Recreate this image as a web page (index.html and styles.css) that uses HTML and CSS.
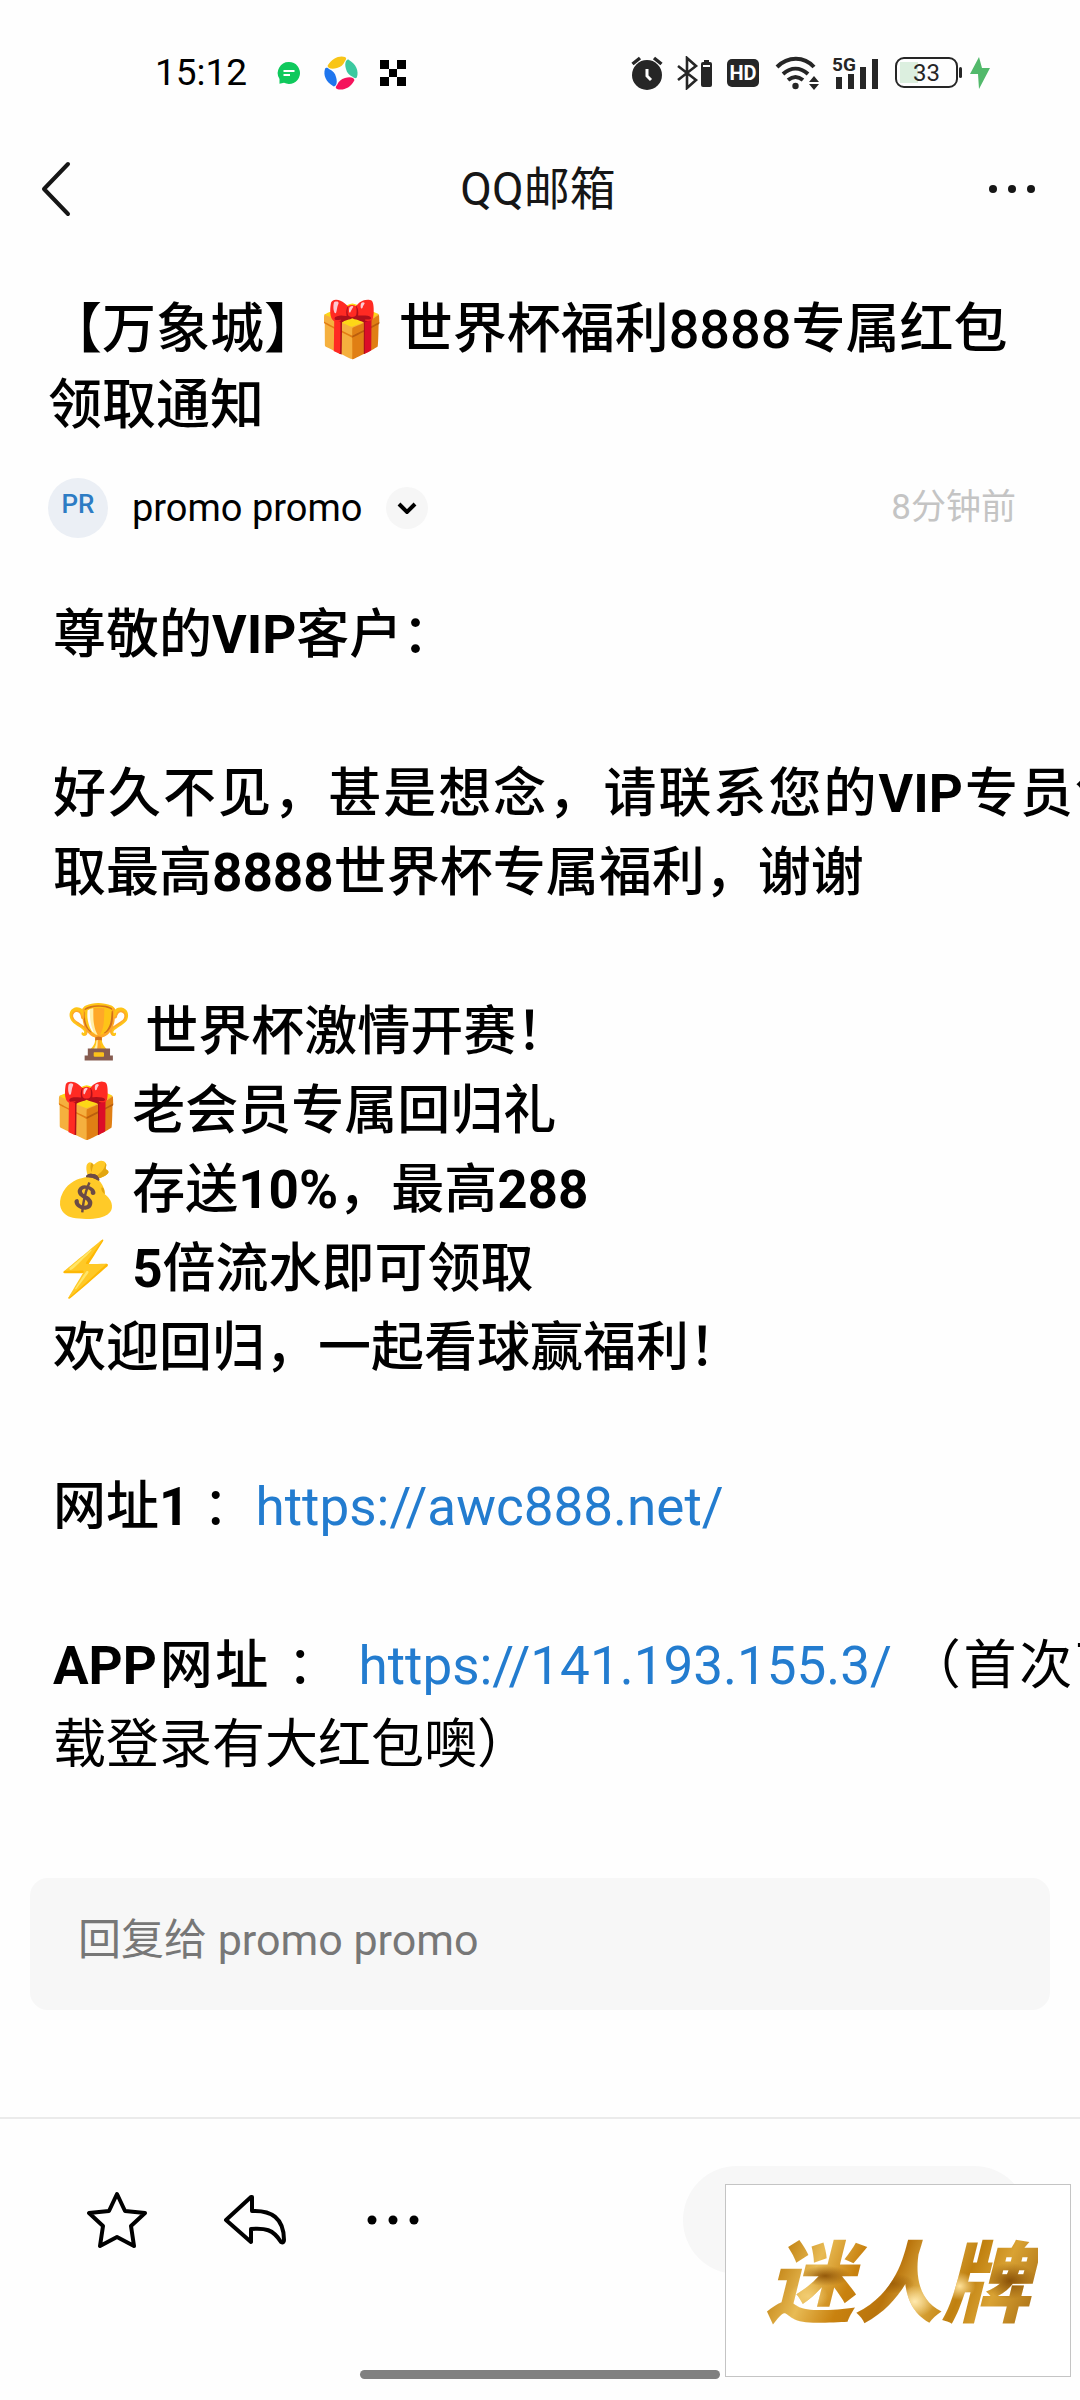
FILE: index.html
```html
<!DOCTYPE html>
<html lang="zh-CN">
<head>
<meta charset="utf-8">
<meta name="viewport" content="width=device-width, initial-scale=1">
<title>QQ邮箱</title>
<link rel="stylesheet" href="styles.css">
</head>
<body>
<div class="screen">
  <div class="status">
    <div class="status-left">
      <span class="clock">15:12</span>
      <svg class="ico-chat" width="24" height="24" viewBox="0 0 24 24" aria-hidden="true"><path d="M12 1a11 11 0 1 1-5 20.800l-4.500 1L2.500 18A11 11 0 0 1 12 1z" fill="#0fc95c"/><path d="M6.500 10h11M6.500 14h6.500" stroke="#fff" stroke-width="1.800"/></svg>
      <svg class="ico-pinwheel" width="36" height="36" viewBox="0 0 36 36" aria-hidden="true"><path d="M5 10C9 3 17 0 22 2c2 1 1 3 0 4-2 4-4 6-8 7-3 1-6 1-8 0-1-1-2-2-1-3z" fill="#f8c518"/><path d="M26 5c7 4 10 11 8 17-1 2-3 1-4 0-4-2-6-4-7-8-1-3-1-6 0-8 1-1 2-2 3-1z" fill="#3cc9a0"/><path d="M31 26c-4 7-11 10-17 8-2-1-1-3 0-4 2-4 4-6 8-7 3-1 6-1 8 0 1 1 2 2 1 3z" fill="#f5135c"/><path d="M10 31C3 27 0 20 2 14c1-2 3-1 4 0 4 2 6 4 7 8 1 3 1 6 0 8-1 1-2 2-3 1z" fill="#1f76ee"/></svg>
      <svg class="ico-check" width="26" height="26" viewBox="0 0 26 26" aria-hidden="true"><path d="M0 0h9v9H0zM17 0h9v9h-9zM9 9h8v8H9zM0 17h9v9H0zM17 17h9v9h-9z"/></svg>
    </div>
    <div class="status-right">
      <svg width="32" height="34" viewBox="0 0 32 34" aria-hidden="true"><circle cx="16" cy="19" r="15" fill="#262626"/><path d="M1.500 8L9 2M30.500 8L23 2" stroke="#262626" stroke-width="3.500"/><path d="M16 13v7l4 4" fill="none" stroke="#fff" stroke-width="3"/></svg>
      <svg class="gap-bt" width="35" height="34" viewBox="0 0 35 34" aria-hidden="true"><path d="M1 10l18 14-9 8V2l9 8L1 24" fill="none" stroke="#262626" stroke-width="2.600"/><path d="M27 4h5v2h-5z" fill="#262626"/><rect x="24" y="6" width="11" height="25" rx="2" fill="#262626"/><path d="M26 10h7" stroke="#fff" stroke-width="2"/></svg>
      <span class="hd">HD</span>
      <svg class="gap-wifi" width="44" height="34" viewBox="0 0 44 34" aria-hidden="true"><g fill="none" stroke="#262626" stroke-width="4"><path d="M2 11c11-11 27-11 37 0"/><path d="M8 18c8-7 17-7 25 0"/><path d="M13 24c5-4 10-4 15 0"/></g><circle cx="20.500" cy="30" r="3.200" fill="#262626"/><path d="M39 20l5 6H34zM39 34l5-6H34z" fill="#262626"/></svg>
      <svg class="gap-cell" width="47" height="34" viewBox="0 0 47 34" aria-hidden="true"><text x="0" y="15" class="cell-text">5G</text><path d="M4 21h6v12H4zM16 18h6v15h-6zM28 11h6v22h-6zM40 3h6v30h-6z" fill="#262626"/></svg>
      <span class="battery"><span class="battery-num">33</span></span>
      <svg class="gap-bolt" width="20" height="32" viewBox="0 0 20 32" aria-hidden="true"><path d="M9 0L0 17h8L9 32 20 11h-8z" fill="#52b96b"/></svg>
    </div>
  </div>

  <header class="nav">
    <button class="icon-btn" aria-label="返回"><svg width="32" height="56" viewBox="0 0 32 56"><path d="M28 3L4 28l24 25" fill="none" stroke="#161616" stroke-width="4" stroke-linecap="round" stroke-linejoin="round"/></svg></button>
    <h1 class="nav-title">QQ邮箱</h1>
    <button class="icon-btn" aria-label="更多"><svg width="48" height="12" viewBox="0 0 48 12"><g fill="#161616"><circle cx="5" cy="6" r="4"/><circle cx="24" cy="6" r="4"/><circle cx="43" cy="6" r="4"/></g></svg></button>
  </header>

  <main class="mail">
    <h2 class="subject">【万象城】🎁 世界杯福利8888专属红包领取通知</h2>
    <div class="sender">
      <span class="avatar">PR</span>
      <span class="name">promo promo</span>
      <button class="expand" aria-label="展开"><svg width="20" height="12" viewBox="0 0 20 12"><path d="M2 2l8 8 8-8" fill="none" stroke="#000" stroke-width="4"/></svg></button>
      <time class="when">8分钟前</time>
    </div>
    <div class="content">
      <p class="strong">尊敬的<b>VIP</b>客户：</p>
      <p class="strong">好久不见，甚是想念，请联系您的<b>VIP</b>专员领取最高<b>8888</b>世界杯专属福利，谢谢</p>
      <p class="strong">&nbsp;🏆 世界杯激情开赛！<br>🎁 老会员专属回归礼<br>💰 存送<b>10%</b>，最高<b>288</b><br>⚡ <b>5</b>倍流水即可领取<br>欢迎回归，一起看球赢福利！</p>
      <p><span class="strong">网址<b>1</b></span> ：<a href="#">https://awc888.net/</a></p>
      <p><span class="strong"><b>APP</b>网址</span> ： <a href="#">https://141.193.155.3/</a> （首次下载登录有大红包噢）</p>
    </div>
    <input class="reply" type="text" aria-label="回复" placeholder="回复给 promo promo">
  </main>

  <footer class="toolbar">
    <button class="icon-btn" aria-label="星标"><svg width="60" height="58" viewBox="0 0 60 58"><path d="M30 3l8 17 20 2-14 13 3 20-17-9-17 9 3-20L2 22l20-2z" fill="none" stroke="#000" stroke-width="4" stroke-linejoin="round"/></svg></button>
    <button class="icon-btn" aria-label="回复"><svg width="64" height="52" viewBox="0 0 64 52"><path d="M28 3L3 26l25 22V35c14-1 22 0 30 13 2 1 3 0 3-2C61 24 48 16 29 17V3z" fill="none" stroke="#000" stroke-width="4" stroke-linejoin="round"/></svg></button>
    <button class="icon-btn" aria-label="更多操作"><svg width="60" height="12" viewBox="0 0 60 12"><g fill="#000"><circle cx="9" cy="6" r="4.500"/><circle cx="30" cy="6" r="4.500"/><circle cx="51" cy="6" r="4.500"/></g></svg></button>
    <button class="pill" aria-label="快捷操作"></button>
  </footer>
  <div class="home-bar"></div>
  <div class="sticker"><span class="sticker-text">迷人牌</span></div>
</div>
</body>
</html>
```
FILE: styles.css
```css
* { box-sizing: border-box; }
body {
  margin: 0;
  background: #fefefe;
  color: #000;
  font-family: Roboto, "Noto Sans CJK SC", "Noto Color Emoji", sans-serif;
}
button { border: 0; padding: 0; background: none; font: inherit; color: inherit; }
svg { display: block; }
h1, h2, p { margin: 0; }

.screen {
  position: relative;
  min-height: 100vh;
  display: flex;
  flex-direction: column;
  overflow: hidden;
}

/* status bar */
.status {
  height: 135px;
  padding: 10px 90px 0 155px;
  display: flex;
  align-items: center;
  justify-content: space-between;
}
.status-left, .status-right { display: flex; align-items: center; }
.clock { font-size: 37px; line-height: 40px; }
.ico-chat { margin-left: 30px; }
.ico-pinwheel { margin-left: 22px; }
.ico-check { margin-left: 21px; }
.gap-bt { margin-left: 14px; }
.hd {
  margin-left: 15px;
  width: 32px;
  height: 28px;
  border-radius: 5px;
  background: #262626;
  color: #fff;
  font-size: 20px;
  font-weight: 700;
  line-height: 29px;
  text-align: center;
}
.gap-wifi { margin-left: 16px; }
.gap-cell { margin-left: 13px; }
.cell-text { font-family: Roboto, sans-serif; font-size: 19px; font-weight: 700; fill: #262626; }
.battery {
  position: relative;
  margin: 0 4px 0 16px;
  width: 63px;
  height: 31px;
  border: 2px solid #262626;
  border-radius: 9px;
  background: linear-gradient(90deg, #dcefdf 18px, transparent 18px) no-repeat 3px 3px / 53px 21px;
  text-align: center;
}
.battery::after {
  content: "";
  position: absolute;
  right: -6px;
  top: 8px;
  width: 3px;
  height: 11px;
  border-radius: 2px;
  background: #262626;
}
.battery-num { display: block; color: #262626; font-size: 24px; line-height: 28px; }
.gap-bolt { margin-left: 8px; }

/* header */
.nav {
  height: 107px;
  padding: 0 44px 0 40px;
  display: grid;
  grid-template-columns: 1fr auto 1fr;
  align-items: center;
}
.nav .icon-btn:last-child { justify-self: end; }
.nav-title { font-size: 46px; font-weight: 400; line-height: 60px; color: #161616; }

/* message */
.mail { flex: 1; }
.subject {
  padding: 50px 64px 0 48px;
  font-size: 54px;
  font-weight: 500;
  line-height: 76px;
}
.sender {
  display: flex;
  align-items: center;
  margin: 34px 64px 0 48px;
}
.avatar {
  width: 60px;
  height: 60px;
  border-radius: 50%;
  background: #ebeff5;
  color: #2d7cc4;
  font-size: 26px;
  font-weight: 500;
  line-height: 52px;
  text-align: center;
}
.name { margin-left: 24px; font-size: 38px; line-height: 48px; }
.expand {
  margin-left: 24px;
  width: 42px;
  height: 42px;
  border-radius: 50%;
  background: #f6f6f6;
  display: grid;
  place-items: center;
}
.when { margin-left: auto; font-size: 35px; line-height: 48px; color: #c4c4c4; }

/* the message body is wider than the window and runs off its right edge */
.content {
  margin: 58px -48px 0 53px;
  font-size: 53px;
  line-height: 79px;
  text-align: justify;
}
.content p + p { margin-top: 80px; }
.strong { font-weight: 500; }
.strong b { font-weight: 700; }
.content a { color: #237ccf; text-decoration: none; }

.reply {
  display: block;
  width: calc(100% - 60px);
  height: 132px;
  margin: 93px 30px 60px;
  padding: 0 48px 8px;
  border: 0;
  border-radius: 18px;
  background: #f7f7f7;
  font: inherit;
  font-size: 43px;
}
.reply::placeholder { color: #777; opacity: 1; }

/* bottom bar */
.toolbar {
  height: 283px;
  padding: 47px 52px 0 87px;
  border-top: 2px solid #ebebeb;
  display: flex;
  align-items: flex-start;
}
.icon-btn { display: flex; align-items: center; }
.toolbar .icon-btn { height: 108px; margin-right: 76px; }
.pill {
  width: 345px;
  height: 108px;
  margin-left: auto;
  border-radius: 54px;
  background: #f7f7f7;
}
.toolbar .icon-btn:nth-child(3) { margin-right: 0; }
.home-bar {
  position: absolute;
  bottom: 21px;
  left: 50%;
  width: 360px;
  height: 9px;
  margin-left: -180px;
  border-radius: 5px;
  background: #808080;
}
.sticker {
  position: absolute;
  right: 9px;
  bottom: 23px;
  width: 346px;
  height: 193px;
  border: 1px solid #c4c4c4;
  background: #fff;
  display: grid;
  place-items: center;
}
.sticker-text {
  padding: 0 8px 8px;
  font-family: "Noto Sans CJK SC", sans-serif;
  font-size: 88px;
  font-weight: 900;
  font-style: italic;
  line-height: 120px;
  color: transparent;
  background:
    radial-gradient(ellipse 26px 10px at 24% 46%, #94590a, transparent),
    radial-gradient(ellipse 22px 10px at 48% 52%, #a0620a, transparent),
    radial-gradient(ellipse 26px 18px at 90% 50%, #8a5208, transparent),
    radial-gradient(ellipse 20px 16px at 56% 66%, #ffe9ae, transparent),
    radial-gradient(ellipse 16px 14px at 72% 54%, #ffe29a, transparent),
    radial-gradient(ellipse 20px 14px at 18% 62%, #f2cd74, transparent),
    linear-gradient(115deg, #a8690d 0%, #c28314 12%, #e8bb55 24%, #c9820f 36%, #b9740c 48%, #dfae45 58%, #c0800f 70%, #d9a233 80%, #9a5f0a 100%);
  -webkit-background-clip: text;
  background-clip: text;
}
```
